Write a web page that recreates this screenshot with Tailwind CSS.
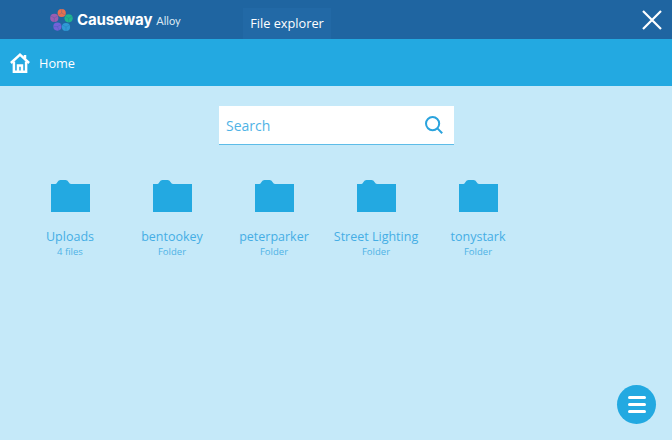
<!DOCTYPE html>
<html lang="en">
<head>
    <meta charset="UTF-8">
    <title>File explorer - Causeway Alloy</title>
    <script src="https://cdn.jsdelivr.net/npm/@tailwindcss/browser@4"></script>
</head>
<body class="bg-[#c5e9f9] font-['Open_Sans',sans-serif] overflow-hidden">
<div class="relative w-[672px] h-[440px] flex flex-col">

    <!-- Top bar -->
    <header class="h-[39px] bg-[#1f65a1] flex items-end shrink-0">
        <div class="flex items-center w-[243px] h-[39px] pl-[50px]">
            <svg class="w-[24px] h-[24px] shrink-0" viewBox="0 0 24 24" stroke="#1f65a1" stroke-opacity=".55" stroke-width=".5">
                <circle cx="11.7" cy="5" r="4.1" fill="#e8704f" stroke="none"/>
                <path d="M11.7 5 V1 M11.7 5 L8.4 7 M11.7 5 L15 7"/>
                <circle cx="4.3" cy="9.9" r="4.1" fill="#9c5cb0" stroke="none"/>
                <path d="M4.3 9.9 L.8 8 M4.3 9.9 L7.8 8 M4.3 9.9 V14"/>
                <circle cx="18.6" cy="10.3" r="4.1" fill="#1fb48f" stroke="none"/>
                <path d="M18.6 10.3 L15 8.4 M18.6 10.3 L22 8.4 M18.6 10.3 V14.4"/>
                <circle cx="7.4" cy="18.6" r="4.1" fill="#7361d8" stroke="none"/>
                <path d="M7.4 18.6 L11 16.6 M7.4 18.6 H3.4 M7.4 18.6 L9 22"/>
                <circle cx="16" cy="19" r="4.1" fill="#2f9ad6" stroke="none"/>
                <path d="M16 19 L12.6 17 M16 19 L19.6 17 M16 19 V23"/>
            </svg>
            <span class="ml-[3px] font-['Inter',sans-serif] font-bold text-[15px] leading-none tracking-[-0.15px] text-white">Causeway</span>
            <span class="ml-[4px] mt-[2px] font-['Lato',sans-serif] text-[11px] leading-none text-[#dbe8f3]">Alloy</span>
        </div>
        <div class="w-[88px] h-[31px] bg-[#2269a6] flex items-center justify-center pt-[1px] text-[12.75px] text-white">File explorer</div>
        <button class="ml-auto mr-[10px] self-center" aria-label="Close">
            <svg class="w-[20px] h-[20px] block" viewBox="0 0 20 20" fill="none" stroke="#ffffff" stroke-width="2.2">
                <path d="M1 1 L19 19 M19 1 L1 19"/>
            </svg>
        </button>
    </header>

    <!-- Breadcrumb -->
    <nav class="h-[47px] bg-[#23a9e1] flex items-center pl-[10px] shrink-0">
        <svg class="w-[20px] h-[20px] shrink-0" viewBox="0 0 20 20" fill="none" stroke="#ffffff" stroke-width="2.5">
            <path d="M.9 10 L10 1.7 L19.1 10"/>
            <path d="M15 2 V5.5"/>
            <path d="M3.9 8.5 V18.7 H16.1 V8.5"/>
            <path d="M8 18.7 V12.6 H12 V18.7"/>
        </svg>
        <span class="ml-[9px] pt-[2px] text-[12.75px] text-white">Home</span>
    </nav>

    <!-- Content -->
    <main class="flex-1 flex flex-col">
        <div class="mt-[20px] ml-[219px] w-[235px] h-[39px] bg-white border-b border-[#5dbce8] flex items-center justify-between pl-[7px] pr-[11px]">
            <span class="text-[14px] text-[#4fb3e6]">Search</span>
            <svg class="w-[18px] h-[18px]" viewBox="0 0 18 18" fill="none" stroke="#2aa3dd" stroke-width="2">
                <circle cx="7.6" cy="7.6" r="6.6"/>
                <path d="M12.4 12.4 L17.2 17.2"/>
            </svg>
        </div>

        <div class="mt-[35px] ml-[19px] flex">
            <div class="w-[102px] flex flex-col items-center">
                <svg class="w-[39px] h-[32px]" viewBox="0 0 39 32" fill="#23a9e1"><path d="M0 4 H4.5 Q5.5 4 6.5 2 Q7.5 0 9.5 0 H14.5 Q16.5 0 17.5 2 Q18.5 4 20 4 H39 V32 H0 Z"/></svg>
                <div class="mt-[15px] text-[12.5px] leading-[20px] text-[#45aee5] whitespace-nowrap">Uploads</div>
                <div class="text-[9.5px] leading-[10px] text-[#4fb3e6]">4 files</div>
            </div>
            <div class="w-[102px] flex flex-col items-center">
                <svg class="w-[39px] h-[32px]" viewBox="0 0 39 32" fill="#23a9e1"><path d="M0 4 H4.5 Q5.5 4 6.5 2 Q7.5 0 9.5 0 H14.5 Q16.5 0 17.5 2 Q18.5 4 20 4 H39 V32 H0 Z"/></svg>
                <div class="mt-[15px] text-[12.5px] leading-[20px] text-[#45aee5] whitespace-nowrap">bentookey</div>
                <div class="text-[9.5px] leading-[10px] text-[#4fb3e6]">Folder</div>
            </div>
            <div class="w-[102px] flex flex-col items-center">
                <svg class="w-[39px] h-[32px]" viewBox="0 0 39 32" fill="#23a9e1"><path d="M0 4 H4.5 Q5.5 4 6.5 2 Q7.5 0 9.5 0 H14.5 Q16.5 0 17.5 2 Q18.5 4 20 4 H39 V32 H0 Z"/></svg>
                <div class="mt-[15px] text-[12.5px] leading-[20px] text-[#45aee5] whitespace-nowrap">peterparker</div>
                <div class="text-[9.5px] leading-[10px] text-[#4fb3e6]">Folder</div>
            </div>
            <div class="w-[102px] flex flex-col items-center">
                <svg class="w-[39px] h-[32px]" viewBox="0 0 39 32" fill="#23a9e1"><path d="M0 4 H4.5 Q5.5 4 6.5 2 Q7.5 0 9.5 0 H14.5 Q16.5 0 17.5 2 Q18.5 4 20 4 H39 V32 H0 Z"/></svg>
                <div class="mt-[15px] text-[12.5px] leading-[20px] text-[#45aee5] whitespace-nowrap">Street Lighting</div>
                <div class="text-[9.5px] leading-[10px] text-[#4fb3e6]">Folder</div>
            </div>
            <div class="w-[102px] flex flex-col items-center">
                <svg class="w-[39px] h-[32px]" viewBox="0 0 39 32" fill="#23a9e1"><path d="M0 4 H4.5 Q5.5 4 6.5 2 Q7.5 0 9.5 0 H14.5 Q16.5 0 17.5 2 Q18.5 4 20 4 H39 V32 H0 Z"/></svg>
                <div class="mt-[15px] text-[12.5px] leading-[20px] text-[#45aee5] whitespace-nowrap">tonystark</div>
                <div class="text-[9.5px] leading-[10px] text-[#4fb3e6]">Folder</div>
            </div>
        </div>
    </main>

    <!-- Floating menu button -->
    <button class="absolute left-[617px] top-[385px] w-[39px] h-[39px] rounded-full bg-[#23a9e1] flex flex-col items-center justify-center gap-[4px]" aria-label="Menu">
        <span class="block w-[18px] h-[3px] rounded-full bg-white"></span>
        <span class="block w-[18px] h-[3px] rounded-full bg-white"></span>
        <span class="block w-[18px] h-[3px] rounded-full bg-white"></span>
    </button>
</div>
</body>
</html>
